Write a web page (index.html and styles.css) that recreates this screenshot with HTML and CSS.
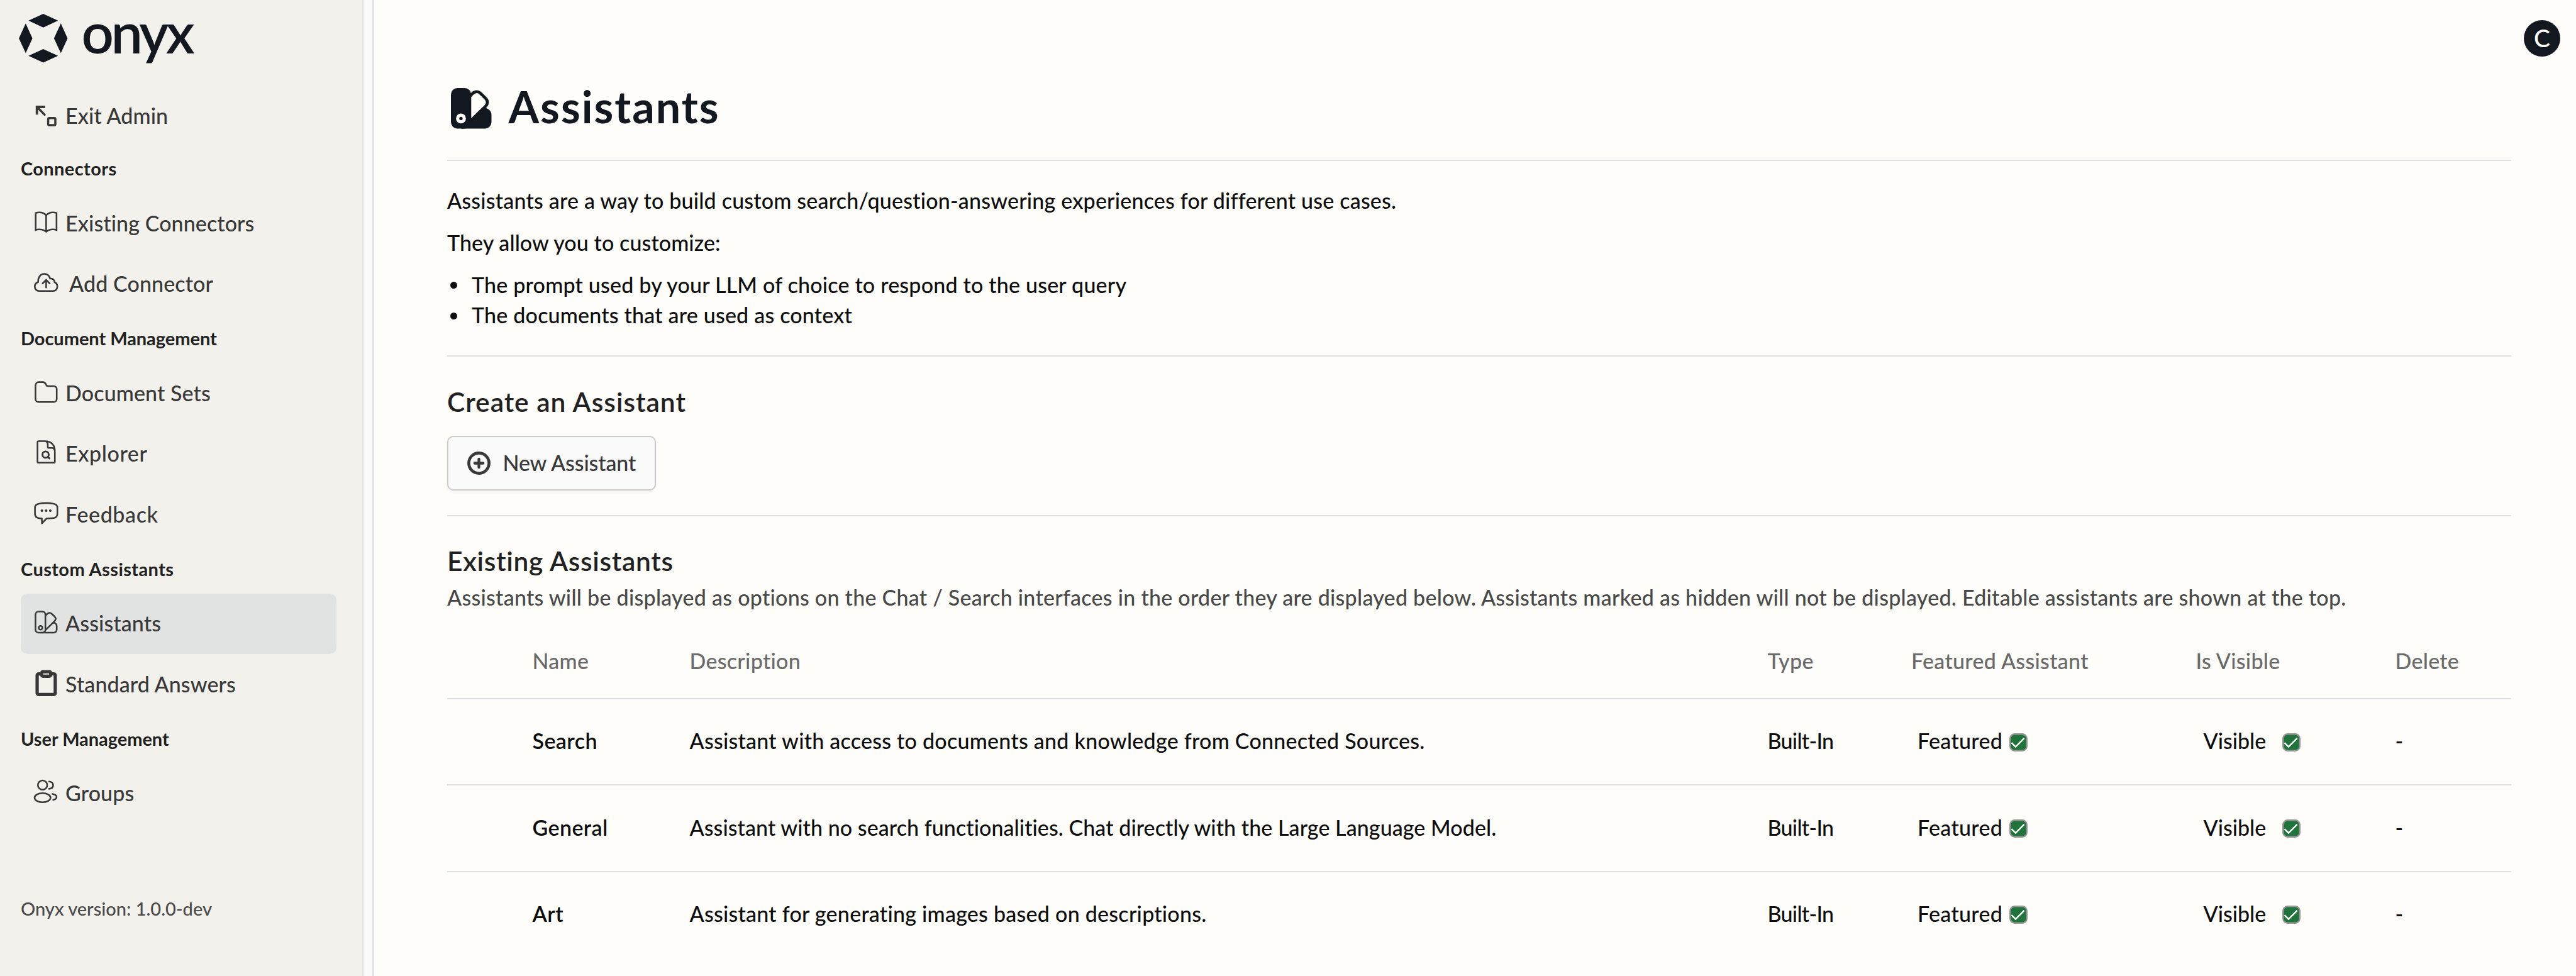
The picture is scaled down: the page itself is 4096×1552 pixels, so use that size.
FILE: index.html
```html
<!DOCTYPE html>
<html lang="en">
<head>
<meta charset="utf-8">
<title>Assistants</title>
<link rel="stylesheet" href="styles.css">
</head>
<body>
<div class="app">
  <aside class="sidebar">
    <div class="logo">
      <svg class="logo-mark" viewBox="37.8 27.7 96 96.1"><path d="M85.8 27.7L115 41.1 85.8 54.6 56.7 41.1ZM85.8 97L115 110.4 85.8 123.8 56.7 110.4ZM51.2 46.7L64.5 76 51.2 105.2 37.8 76ZM120.5 46.7L133.8 76 120.5 105.2 107 76Z"/></svg>
      <span class="logo-text">onyx</span>
    </div>
    <nav>
      <a class="item exit"><svg class="icon" viewBox="0 0 48 48"><path stroke-width="4.8" d="M5.9 21.6V6.2H22"/><path stroke-width="4.4" stroke-linecap="round" d="M7 7.2L21 21.6"/><rect x="28.1" y="28.3" width="14.2" height="14" rx="2" stroke-width="4.3"/></svg><span>Exit Admin</span></a>
      <h4>Connectors</h4>
      <a class="item"><svg class="icon" viewBox="0 0 48 48"><path d="M24.1 8C21 4.5 16 2.2 11 2.2c-3 0-5.500.4-7.600 1.200V37c2.200-1 4.600-1.300 7.400-1.300 5 0 10 2 13.300 4.600c3.300-2.600 8.300-4.600 13.300-4.600 2.800 0 5 .4 7.200 1.300V3.400c-2-.8-4.500-1.200-7.400-1.200-5 0-10 2.300-13.100 5.800V40"/></svg><span>Existing Connectors</span></a>
      <a class="item add"><svg class="icon" viewBox="0 0 48 48"><path d="M10.500 38.300C5 38.300 1.600 34 1.600 29.500c0-4 2.400-7.500 6.600-9C8 11 13 4.400 20.500 4.400c5.500 0 10 3.600 11.600 9.400 4.500-.6 8.500 2 8.600 7 3.500 1.500 5.500 4.800 5.500 8.400 0 5-3.400 9.100-8.200 9.100Z"/><path stroke-linecap="round" d="M24.100 31.500V17M17 23.500l7.100-7.200 7.100 7.200"/></svg><span>Add Connector</span></a>
      <h4 class="tight">Document Management</h4>
      <a class="item"><svg class="icon" viewBox="0 0 48 48"><path d="M3 8.500A6.500 6.500 0 0 1 9.500 2H18c2.200 0 3.800 1.200 5 3.500l1 1.800c.8 1.600 1.800 2.600 3.500 2.600H39c3.500 0 6 2.500 6 6V35.300a6 6 0 0 1-6 6H9a6 6 0 0 1-6-6Z"/></svg><span>Document Sets</span></a>
      <a class="item wide"><svg class="icon" viewBox="0 0 48 48"><path d="M23-.6H9a2 2 0 0 0-2 2V40a2 2 0 0 0 2 2H39.300a2 2 0 0 0 2-2V19C41.300 7 34 -.6 22-.6 26 0 27.300 2.500 27.300 6v4.500c0 1.500.8 2.200 2.200 2.200H35c3.500 0 5.800 2 6.300 6"/><circle cx="23" cy="26" r="6.200" stroke-width="3.600"/><path stroke-width="3.600" stroke-linecap="round" d="M27.600 30.500L30.600 33.400"/></svg><span>Explorer</span></a>
      <a class="item wide"><svg class="icon" viewBox="0 0 48 48"><path stroke-linejoin="round" d="M10 2.600C19 .6 29 .6 38.500 2.600c5 .8 7.800 3.400 7.800 8V22.500c0 5-2.300 7.600-7 8.200-4.700.5-9.500.9-14.300 1L15.700 41.500V31.700c-2 0-4-.2-6-.6C4.500 30.300 2 27.500 2 22.500V10.600C2 6 5 3.400 10 2.600Z"/><g class="solid"><circle cx="15.700" cy="16.300" r="2.600"/><circle cx="24" cy="16.300" r="2.600"/><circle cx="32.300" cy="16.300" r="2.600"/></g></svg><span>Feedback</span></a>
      <h4>Custom Assistants</h4>
      <a class="item active"><svg class="icon" viewBox="0 0 48 48"><rect x="3" y=".7" width="19.600" height="41.600" rx="6"/><circle cx="13" cy="32.700" r="3.700"/><path d="M22.500 9l3.200-3.400c2.800-3 6.300-3.400 9.300-.6l5.400 5c3 3 3.200 6.500.4 9.500L22.500 37.500M37.500 22.500c4.500 0 7.500 2.700 7.500 7V36a6 6 0 0 1-6 6.300H15"/></svg><span>Assistants</span></a>
      <a class="item"><svg class="icon" viewBox="0 0 48 48"><g stroke-width="6.500"><rect x="6.300" y="3.300" width="35.800" height="40.700" rx="3"/></g><rect class="solid" x="12" y="-4.500" width="24.300" height="15.700" rx="6"/><rect class="paper" x="18.300" y="2.200" width="11.700" height="2.400"/></svg><span>Standard Answers</span></a>
      <h4 class="tight">User Management</h4>
      <a class="item"><svg class="icon" viewBox="0 0 48 48"><circle cx="17" cy="8" r="9.200"/><ellipse cx="17" cy="33" rx="15.800" ry="9"/><path stroke-linecap="round" d="M30 1c5 .3 8 3.300 8 7.200s-3 6.800-8 7.200M36.500 25.500c5 1 8.300 3.200 8.300 6s-2.600 4.900-6.800 5.900"/></svg><span>Groups</span></a>
    </nav>
    <p class="version">Onyx version: 1.0.0-dev</p>
  </aside>
  <div class="gutter"></div>
  <main>
    <div class="avatar">C</div>
    <header>
      <svg class="title-icon" viewBox="0 0 80 80"><rect width="40" height="80" rx="13"/><path d="M20 80L40 59.500 68 38v1.500C75 41 80 46 80 53V67a13 13 0 0 1-13 13Z"/><path class="leaf" d="M37 16.500l5.500-5.500c5-5 11.500-5 16.300-.2l9.500 9.500c4.700 4.700 4.700 10.700.2 15.500L37 66.500"/><circle class="hole" cx="19.800" cy="60" r="9.700"/><circle cx="19.800" cy="60" r="3.300"/></svg>
      <h1>Assistants</h1>
    </header>
    <hr>
    <section class="intro">
      <p>Assistants are a way to build custom search/question-answering experiences for different use cases.</p>
      <p class="snug">They allow you to customize:</p>
      <ul>
        <li>The prompt used by your LLM of choice to respond to the user query</li>
        <li>The documents that are used as context</li>
      </ul>
    </section>
    <hr>
    <section class="create">
      <h2>Create an Assistant</h2>
      <button><svg viewBox="0 0 46 46"><circle cx="23" cy="23" r="20" stroke-width="5.800"/><path stroke-width="5.400" stroke-linecap="round" d="M23 14.800V31.200M14.800 23H31.200"/></svg><span>New Assistant</span></button>
    </section>
    <hr>
    <section class="existing">
      <h2>Existing Assistants</h2>
      <p class="muted">Assistants will be displayed as options on the Chat / Search interfaces in the order they are displayed below. Assistants marked as hidden will not be displayed. Editable assistants are shown at the top.</p>
      <div class="table">
        <div class="row head"><span></span><span>Name</span><span>Description</span><span>Type</span><span>Featured Assistant</span><span>Is Visible</span><span>Delete</span></div>
        <div class="row"><span></span><b>Search</b><span>Assistant with access to documents and knowledge from Connected Sources.</span><span class="type">Built-In</span><span class="flag">Featured<svg class="check" viewBox="0 0 36 36"><rect x="1.500" y="1.500" width="33" height="33" rx="9"/><path d="M4.300 18.700L12.300 26.800 29.300 9.700"/></svg></span><span class="flag vis">Visible<svg class="check" viewBox="0 0 36 36"><rect x="1.500" y="1.500" width="33" height="33" rx="9"/><path d="M4.300 18.700L12.300 26.800 29.300 9.700"/></svg></span><span>-</span></div>
        <div class="row"><span></span><b>General</b><span class="snug">Assistant with no search functionalities. Chat directly with the Large Language Model.</span><span class="type">Built-In</span><span class="flag">Featured<svg class="check" viewBox="0 0 36 36"><rect x="1.500" y="1.500" width="33" height="33" rx="9"/><path d="M4.300 18.700L12.300 26.800 29.300 9.700"/></svg></span><span class="flag vis">Visible<svg class="check" viewBox="0 0 36 36"><rect x="1.500" y="1.500" width="33" height="33" rx="9"/><path d="M4.300 18.700L12.300 26.800 29.300 9.700"/></svg></span><span>-</span></div>
        <div class="row"><span></span><b>Art</b><span>Assistant for generating images based on descriptions.</span><span class="type">Built-In</span><span class="flag">Featured<svg class="check" viewBox="0 0 36 36"><rect x="1.500" y="1.500" width="33" height="33" rx="9"/><path d="M4.300 18.700L12.300 26.800 29.300 9.700"/></svg></span><span class="flag vis">Visible<svg class="check" viewBox="0 0 36 36"><rect x="1.500" y="1.500" width="33" height="33" rx="9"/><path d="M4.300 18.700L12.300 26.800 29.300 9.700"/></svg></span><span>-</span></div>
      </div>
    </section>
  </main>
</div>
</body>
</html>
```
FILE: styles.css
```css
* { box-sizing: border-box; }
body {
  margin: 0;
  background: #fefdfa;
  color: #0d0d0d;
  font: 500 34px/48px Lato, sans-serif;
  letter-spacing: 0.100px;
  font-variant-ligatures: none;
}
h1, h2, h4, p, ul { margin: 0; padding: 0; }
.app { display: flex; height: 1552px; overflow: hidden; }

/* Sidebar */
.sidebar {
  width: 578px;
  flex: none;
  background: #f2f1ec;
  border-right: 2px solid #dfe1e0;
  padding: 0 41px 0 33px;
  display: flex;
  flex-direction: column;
}
.gutter {
  width: 17px;
  flex: none;
  background: #fafafa;
  border-right: 3px solid #e0e3e2;
}
.logo { display: flex; height: 134px; margin-left: -3px; }
.logo-mark { width: 77.500px; height: 77.500px; margin-top: 22px; fill: #131720; }
.logo-text {
  margin-left: 22px;
  height: 110px;
  font-size: 90px;
  line-height: 101px;
  font-weight: 600;
  letter-spacing: -4.500px;
  color: #131720;
}
.item {
  display: flex;
  align-items: center;
  height: 96.500px;
  padding-left: 21px;
  border-radius: 10px;
  color: #383838;
}
.item span { margin-left: 11.500px; margin-top: -1px; }
.item.exit { height: 100px; }
.item.exit + h4 { height: 73px; line-height: 67px; }
.item.add span { margin-left: 17.500px; }
.item.wide { letter-spacing: 0.600px; }
.item.active { background: #e1e3e2; }
.icon {
  width: 38.600px;
  height: 38.600px;
  overflow: visible;
  fill: none;
  stroke: #383838;
  stroke-width: 3.200;
}
.icon .solid { fill: #383838; stroke: none; }
.icon .paper { fill: #f2f1ec; stroke: none; }
h4 {
  height: 77px;
  line-height: 75px;
  font-size: 29px;
  font-weight: 700;
  letter-spacing: 0.400px;
  color: #212121;
}
h4.tight { letter-spacing: -0.050px; }
.version {
  margin-top: 111px;
  font-size: 29px;
  letter-spacing: 0;
  color: #4a4a4a;
}

/* Page */
main { flex: 1; padding: 127px 103px 0 116px; position: relative; }
.avatar {
  position: absolute;
  top: 32px;
  right: 25px;
  width: 58px;
  height: 58px;
  border-radius: 50%;
  background: #131720;
  color: #fff;
  font-size: 39px;
  line-height: 56px;
  text-align: center;
}
header { display: flex; height: 84px; padding-left: 6px; }
.title-icon { width: 64.500px; height: 64.500px; margin-top: 13px; fill: #131720; }
.title-icon .hole { fill: #fefdfa; }
.title-icon .leaf { fill: none; stroke: #131720; stroke-width: 6; }
h1 {
  margin-left: 27px;
  font-size: 70px;
  line-height: 85px;
  font-weight: 700;
  letter-spacing: 2px;
  color: #131720;
}
hr { height: 2px; margin: 0; border: 0; background: #e0e0e0; }
header + hr { margin-top: 43px; }
.intro { padding-top: 38.500px; height: 308.500px; letter-spacing: 0.200px; }
.intro p { margin-bottom: 19px; }
.intro p.snug { letter-spacing: 0.100px; }
.intro ul { list-style: none; }
.intro li {
  display: flex;
  align-items: center;
  height: 48.500px;
}
.intro li::before {
  content: "";
  width: 11px;
  height: 11px;
  margin: 2px 23px 0 5px;
  border-radius: 50%;
  background: #0d0d0d;
}
h2 {
  font-size: 42.500px;
  line-height: 56px;
  font-weight: 600;
  letter-spacing: 1px;
  color: #212121;
}
.create { padding-top: 44.500px; height: 252px; }
button {
  display: flex;
  align-items: center;
  width: 332px;
  height: 87px;
  margin-top: 26px;
  padding: 0 0 0 30px;
  background: #fafafa;
  border: 2.500px solid #ccc;
  border-radius: 10px;
  box-shadow: 0 2px 5px rgba(0, 0, 0, 0.06);
  color: #383838;
  font: inherit;
  letter-spacing: -0.100px;
}
button svg { width: 37px; height: 37px; fill: none; stroke: #383838; }
button span { margin: -2px 0 0 19.500px; }
.existing { padding-top: 43.500px; }
.existing h2 { letter-spacing: 0.700px; }
.muted { margin-top: 6px; color: #484848; white-space: nowrap; letter-spacing: 0.267px; }

/* Assistants table */
.table { margin-top: 17px; }
.row {
  display: grid;
  grid-template-columns: 135.500px 250px 1714px 228.500px 452.500px 317px 1fr;
  align-items: center;
  height: 137.400px;
  padding-bottom: 3px;
  letter-spacing: 0.250px;
}
.row + .row { border-top: 2px solid #dfe1e8; }
.row.head { height: 119px; color: #6a6a6a; padding-bottom: 0; letter-spacing: 0.300px; }
.row b { font-weight: 600; letter-spacing: 0.400px; }
.row .snug { letter-spacing: 0.070px; }
.row .type { letter-spacing: -0.700px; }
.flag { display: flex; align-items: center; padding-left: 10px; letter-spacing: 0.300px; }
.flag.vis { padding-left: 12px; letter-spacing: 0; }
.check { width: 29px; height: 29px; margin: 4px 0 0 11px; }
.vis .check { margin-left: 26px; }
.check rect { fill: #1f733b; stroke: #969696; stroke-width: 3; }
.check path { fill: none; stroke: #fff; stroke-width: 3; }
```
